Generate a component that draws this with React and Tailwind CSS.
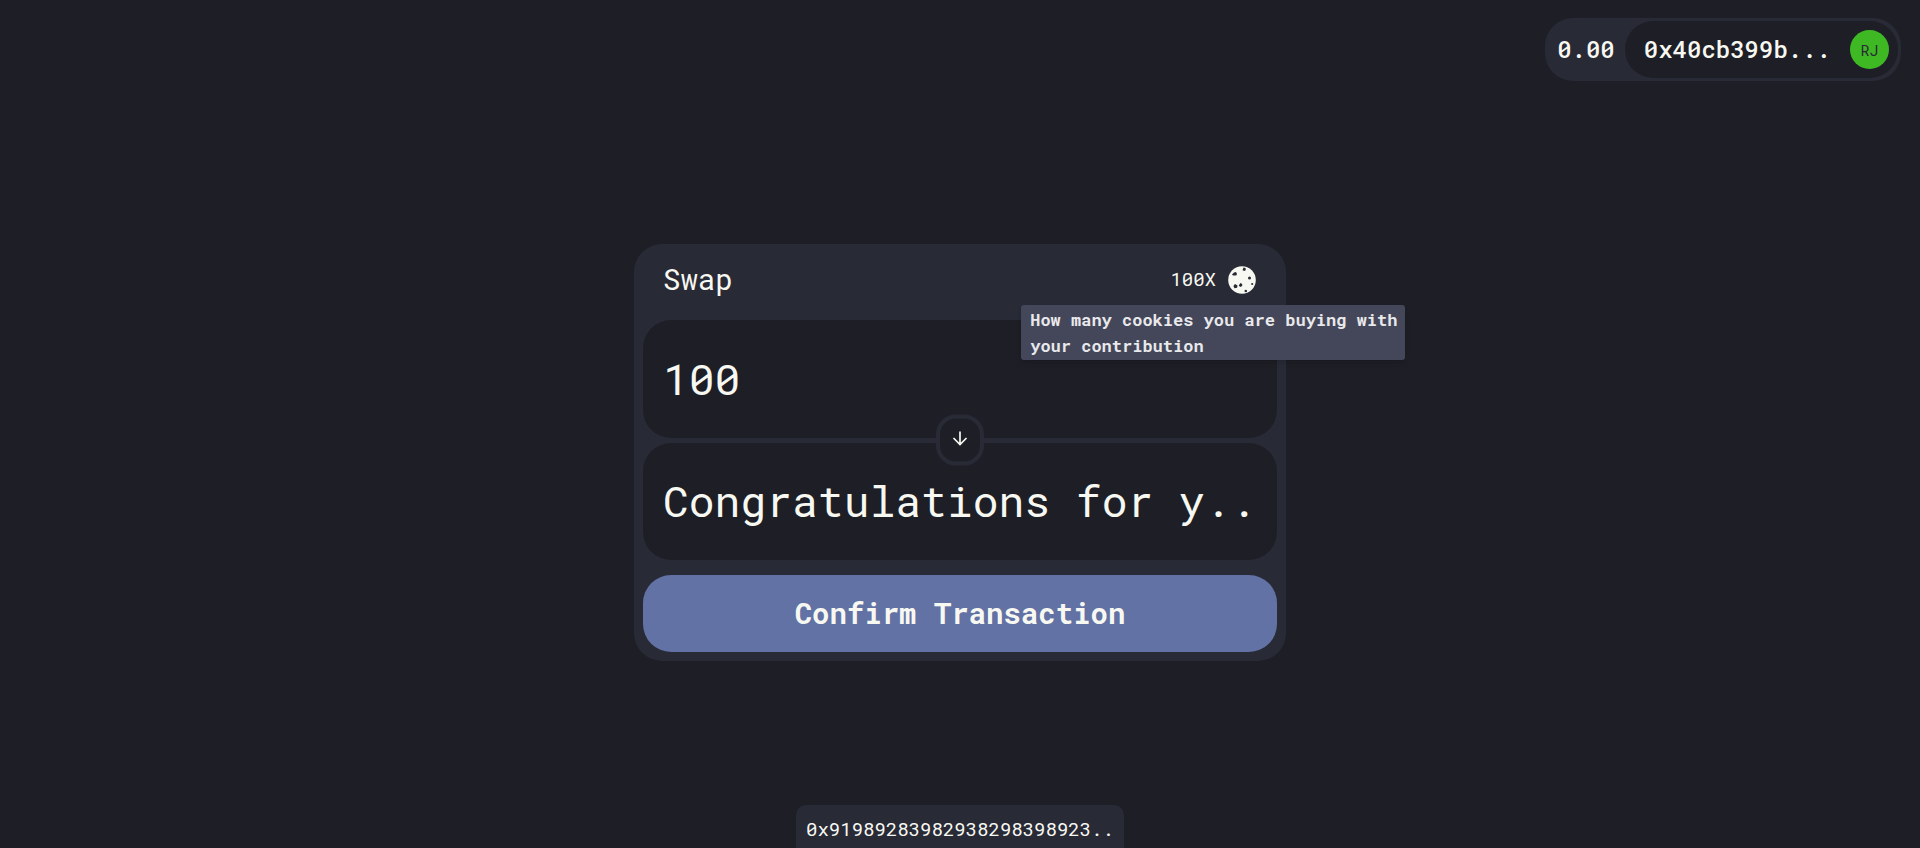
import { useState } from "react";

function ArrowDown() {
  return (
    <svg viewBox="0 0 16 16" className="h-4 w-4" fill="none" stroke="currentColor" strokeWidth="1.7" aria-hidden="true">
      <path d="M8 1v13M1.5 7.5 8 14l6.5-6.5" />
    </svg>
  );
}

function Cookie() {
  return (
    <svg viewBox="0 0 28 28" className="h-7 w-7" aria-hidden="true">
      <circle cx="14" cy="14" r="13.8" fill="#f8f8f2" />
      <g fill="#282a36">
        <path d="M6 6.5 8 6l1 2-.8 1.6H5L4 8.4z" />
        <path d="m15.5 1.5 2 .5.3 2-1.3 1-2-.8z" />
        <circle cx="21.5" cy="12" r="1.5" />
        <path d="m7 18 2.5 1.6-.4 2.2-2.6.4L5.4 20z" />
        <path d="m12.4 17 1.8 1v2l-2 1-1.4-1.4z" />
        <circle cx="24.2" cy="18" r="1.1" />
        <circle cx="17.8" cy="25" r="1.3" />
      </g>
    </svg>
  );
}

export default function App() {
  const [amount, setAmount] = useState("100");
  return (
    <div className="flex min-h-screen flex-col overflow-hidden bg-[#1e1f26] font-['Roboto_Mono','DejaVu_Sans_Mono',monospace] text-[#f8f8f2]">
      <header className="flex justify-end px-[19px] pt-[18px]">
        <div className="flex items-center rounded-[28px] bg-[#282a36] p-[3px] text-2xl font-medium">
          <span className="pr-[10px] pb-0.5 pl-[9px]">0.00</span>
          <div className="flex items-center gap-[19px] rounded-[28px] bg-[#1e1f26] py-[9px] pr-[9px] pl-[19px]">
            <span className="pb-0.5">0x40cb399b...</span>
            <span className="flex h-[39px] w-[39px] items-center justify-center rounded-full bg-[#3eb924] text-[15px] font-normal text-[#282a36]">
              RJ
            </span>
          </div>
        </div>
      </header>

      <main className="flex flex-1 items-center justify-center pt-[19px]">
        <section className="w-full max-w-[652px] rounded-[28px] bg-[#282a36] p-[9px]">
          <div className="flex h-[67px] items-center justify-between pr-[21px] pb-[14px] pl-5">
            <h1 className="text-[29px]">Swap</h1>
            <div className="relative flex items-center gap-3 text-[19px]">
              <span>100X</span>
              <Cookie />
              <div
                role="tooltip"
                className="absolute top-full left-1/2 z-20 mt-[11px] w-[384px] -translate-x-48 rounded-[3px] bg-[#44475a] pt-[2px] pr-[6px] pb-px pl-[9px] text-[17px] leading-[26px] font-bold text-[#e9e9ec] shadow-md"
              >
                How many cookies you are buying with your contribution
              </div>
            </div>
          </div>

          <div className="relative flex flex-col gap-[5px]">
            <input
              aria-label="Amount to swap"
              value={amount}
              onChange={(e) => setAmount(e.target.value)}
              className="h-[118px] w-full rounded-[28px] bg-[#1e1f26] px-5 pb-0.5 text-[43px] outline-none"
            />
            <input
              aria-label="Result"
              readOnly
              value="Congratulations for y.."
              className="h-[117px] w-full rounded-[28px] bg-[#1e1f26] px-5 pb-0.5 text-[43px] outline-none"
            />
            <button
              type="button"
              aria-label="Switch direction"
              className="absolute top-1/2 left-1/2 flex h-[51px] w-12 -translate-1/2 items-center justify-center rounded-[20px] border-4 border-[#282a36] bg-[#1e1f26] pb-1"
            >
              <ArrowDown />
            </button>
          </div>

          <button type="button" className="mt-[15px] h-[77px] w-full rounded-[28px] bg-[#6272a4] text-[29px] font-bold">
            Confirm Transaction
          </button>
        </section>
      </main>

      <footer className="flex justify-center">
        <p className="h-[43px] rounded-t-[10px] bg-[#282a36] px-[10px] pt-[10px] text-[19px] leading-7">
          0x91989283982938298398923..
        </p>
      </footer>
    </div>
  );
}
